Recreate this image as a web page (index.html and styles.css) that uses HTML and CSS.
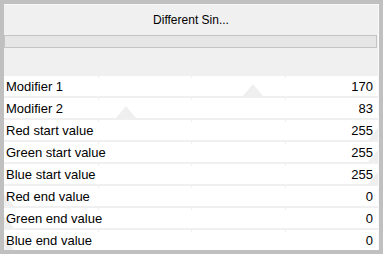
FILE: index.html
```html
<!DOCTYPE html>
<html>
<head>
  <title>Different Sin</title>
  <link rel="stylesheet" href="styles.css">
</head>
<body>
  <div class="panel">
    <div class="title">Different Sin...</div>
    <div class="progress"></div>

    <div class="rows">
      <div class="row">
        <span class="tick t1"></span><span class="tick t2"></span><span class="tick t3"></span>
        <span class="thumb" style="left: 66.67%;"></span>
        <span class="label">Modifier 1</span><span class="value">170</span>
      </div>
      <div class="row">
        <span class="tick t1"></span><span class="tick t2"></span><span class="tick t3"></span>
        <span class="thumb" style="left: 32.55%;"></span>
        <span class="label">Modifier 2</span><span class="value">83</span>
      </div>
      <div class="row">
        <span class="tick t1"></span><span class="tick t2"></span><span class="tick t3"></span>
        <span class="thumb" style="left: 100%;"></span>
        <span class="label">Red start value</span><span class="value">255</span>
      </div>
      <div class="row">
        <span class="tick t1"></span><span class="tick t2"></span><span class="tick t3"></span>
        <span class="thumb" style="left: 100%;"></span>
        <span class="label">Green start value</span><span class="value">255</span>
      </div>
      <div class="row">
        <span class="tick t1"></span><span class="tick t2"></span><span class="tick t3"></span>
        <span class="thumb" style="left: 100%;"></span>
        <span class="label">Blue start value</span><span class="value">255</span>
      </div>
      <div class="row">
        <span class="tick t1"></span><span class="tick t2"></span><span class="tick t3"></span>
        <span class="thumb" style="left: 0%;"></span>
        <span class="label">Red end value</span><span class="value">0</span>
      </div>
      <div class="row">
        <span class="tick t1"></span><span class="tick t2"></span><span class="tick t3"></span>
        <span class="thumb" style="left: 0%;"></span>
        <span class="label">Green end value</span><span class="value">0</span>
      </div>
      <div class="row">
        <span class="tick t1"></span><span class="tick t2"></span><span class="tick t3"></span>
        <span class="thumb" style="left: 0%;"></span>
        <span class="label">Blue end value</span><span class="value">0</span>
      </div>
    </div>
  </div>
</body>
</html>
```

FILE: styles.css
```css
body {
  margin: 0;
  padding: 4px 4px 3px 4px;
  background-color: #c0c0c0;
  font-family: "Liberation Sans", Arial, sans-serif;
  font-size: 13px;
  color: #000;
}

.panel {
  width: 374px;
  background-color: #f0f0f0;
  border-top: 1px solid #f8f8f8;
  border-right: 1px solid #fafafa;
}

.title {
  height: 30px;
  line-height: 30px;
  text-align: center;
  font-size: 12px;
}

.progress {
  width: 371px;
  height: 11px;
  border: 1px solid #c4c4c4;
  background-color: #e6e6e6;
}

.rows {
  margin-top: 28px;
  display: flex;
  flex-direction: column;
  gap: 2px;
}

.row {
  position: relative;
  overflow: hidden;
  height: 20px;
  background-color: #fff;
  display: flex;
  justify-content: space-between;
  align-items: center;
  padding: 0 5px 0 2px;
}

.label, .value {
  position: relative;
  z-index: 1;
}

.tick {
  position: absolute;
  top: 0;
  width: 1px;
  height: 2px;
  background-color: #f0f0f0;
}

.t1 { left: 25%; }
.t2 { left: 50%; }
.t3 { left: 75%; }

.thumb {
  position: absolute;
  bottom: 0;
  width: 0;
  height: 0;
  margin-left: -10px;
  border-left: 10px solid transparent;
  border-right: 10px solid transparent;
  border-bottom: 12px solid #efefef;
}
```
